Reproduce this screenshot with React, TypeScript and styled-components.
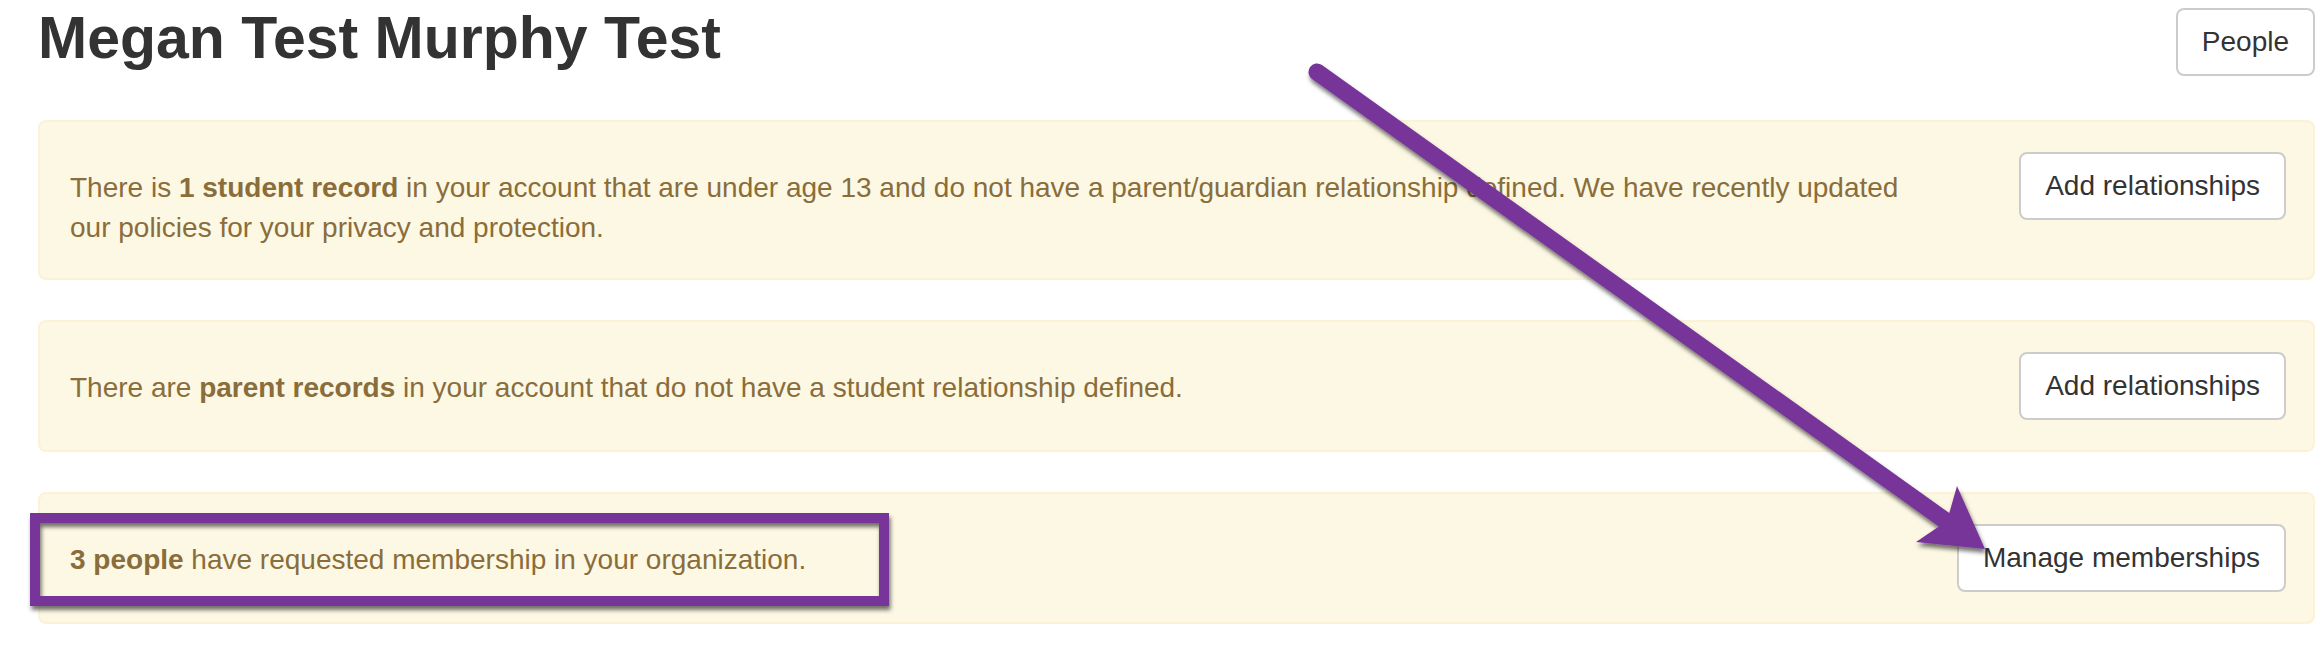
import React from "react";
import styled, { createGlobalStyle } from "styled-components";

const GlobalStyle = createGlobalStyle`
  html, body {
    margin: 0;
    padding: 0;
    background: #ffffff;
  }
  body {
    font-family: "Liberation Sans", Arial, Helvetica, sans-serif;
    color: #333333;
  }
  * { box-sizing: border-box; }
`;

const Page = styled.div`
  position: relative;
  width: 2316px;
  height: 652px;
  overflow: hidden;
  padding: 0 1px 0 38px;
`;

const Header = styled.header`
  display: flex;
  justify-content: space-between;
  align-items: flex-start;
  padding-top: 6px;
  margin-bottom: 44px;
`;

const Title = styled.h1`
  margin: 0;
  font-family: "Liberation Sans", Arial, Helvetica, sans-serif;
  font-weight: 700;
  font-size: 59px;
  line-height: 64px;
  color: #333333;
`;

const Button = styled.button<{ $offset?: number }>`
  display: inline-block;
  flex: none;
  margin-top: ${(p) => p.$offset ?? 0}px;
  padding: 12px 24px;
  font-family: "Liberation Sans", Arial, Helvetica, sans-serif;
  font-size: 28px;
  line-height: 40px;
  color: #333333;
  background: #ffffff;
  border: 2px solid #cccccc;
  border-radius: 8px;
  white-space: nowrap;
  cursor: pointer;
`;

const AlertList = styled.div`
  display: flex;
  flex-direction: column;
  gap: 40px;
`;

const Alert = styled.div`
  display: flex;
  align-items: flex-start;
  padding: 30px 27px 30px 30px;
  background: #fcf8e3;
  border: 2px solid #fbf2d8;
  border-radius: 8px;
  color: #8a6d3b;
`;

const Message = styled.p`
  flex: 1;
  margin: 0 87px 0 0;
  padding-top: 16px;
  font-size: 28px;
  line-height: 40px;
  color: #8a6d3b;

  strong {
    font-weight: 700;
  }
`;

const Overlay = styled.svg`
  position: absolute;
  left: 0;
  top: 0;
  width: 2316px;
  height: 652px;
  pointer-events: none;
`;

const PURPLE = "#77369a";

const Annotations: React.FC = () => (
  <Overlay viewBox="0 0 2316 652" xmlns="http://www.w3.org/2000/svg">
    <defs>
      <filter id="shadow" x="-10%" y="-10%" width="120%" height="130%">
        <feDropShadow dx="1.5" dy="4" stdDeviation="2.2" floodColor="#000" floodOpacity="0.55" />
      </filter>
    </defs>
    <g filter="url(#shadow)">
      <rect x="35" y="518" width="849" height="83" fill="none" stroke={PURPLE} strokeWidth="10" />
    </g>
    <g filter="url(#shadow)">
      <line x1="1317" y1="72" x2="1950" y2="524" stroke={PURPLE} strokeWidth="17" strokeLinecap="round" />
      <polygon points="1985,549 1957,486 1947,521 1916,542" fill={PURPLE} />
    </g>
  </Overlay>
);

export default function App() {
  return (
    <>
      <GlobalStyle />
      <Page>
        <Header>
          <Title>Megan Test Murphy Test</Title>
          <Button $offset={2}>People</Button>
        </Header>
        <AlertList>
          <Alert>
            <Message>
              There is <strong>1 student record</strong> in your account that are under age 13 and do not
              have a parent/guardian relationship defined. We have recently updated our policies for your
              privacy and protection.
            </Message>
            <Button>Add relationships</Button>
          </Alert>
          <Alert>
            <Message>
              There are <strong>parent records</strong> in your account that do not have a student
              relationship defined.
            </Message>
            <Button>Add relationships</Button>
          </Alert>
          <Alert>
            <Message>
              <strong>3 people</strong> have requested membership in your organization.
            </Message>
            <Button>Manage memberships</Button>
          </Alert>
        </AlertList>
        <Annotations />
      </Page>
    </>
  );
}
